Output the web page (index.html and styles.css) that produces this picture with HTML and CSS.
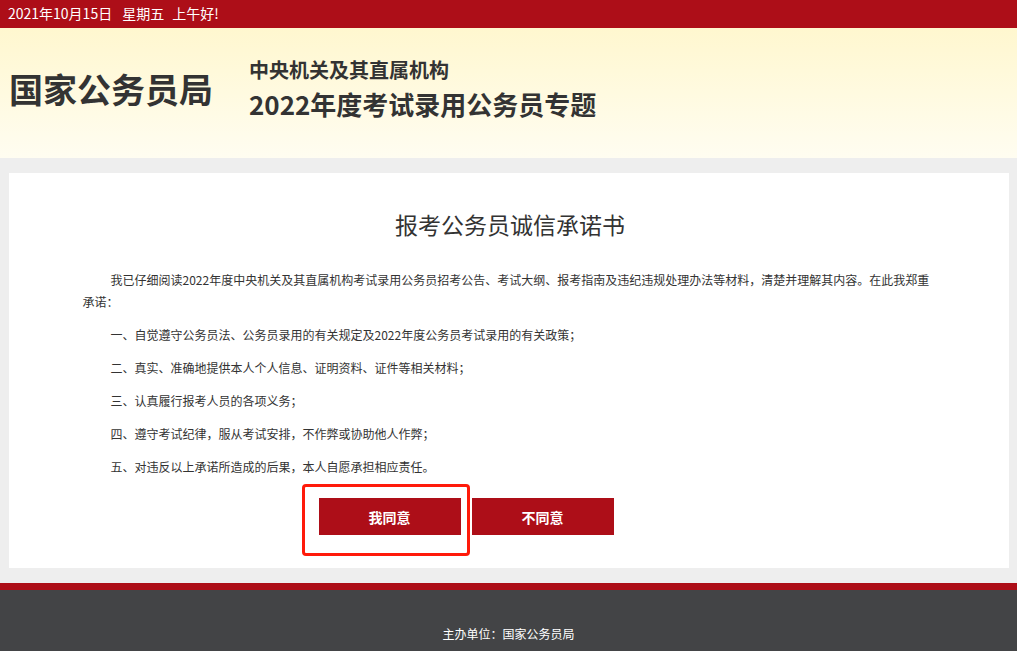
FILE: index.html
```html
<!DOCTYPE html>
<html>

<head>
    <meta charset="utf-8">
    <link rel="stylesheet" href="styles.css">
</head>

<body>

    <div class="topbar">
        <span>2021年10月15日</span><span class="gap">星期五</span><span class="gap-sm">上午好!</span>
    </div>

    <div class="header">
        <div class="logo">国家公务员局</div>
        <div class="header-title">
            <div class="sub">中央机关及其直属机构</div>
            <div class="main">2022年度考试录用公务员专题</div>
        </div>
    </div>

    <div class="page">
        <div class="container">
            <h2>报考公务员诚信承诺书</h2>

            <p class="indent">我已仔细阅读2022年度中央机关及其直属机构考试录用公务员招考公告、考试大纲、报考指南及违纪违规处理办法等材料，清楚并理解其内容。在此我郑重承诺：</p>
            <p class="indent">一、自觉遵守公务员法、公务员录用的有关规定及2022年度公务员考试录用的有关政策；</p>
            <p class="indent">二、真实、准确地提供本人个人信息、证明资料、证件等相关材料；</p>
            <p class="indent">三、认真履行报考人员的各项义务；</p>
            <p class="indent">四、遵守考试纪律，服从考试安排，不作弊或协助他人作弊；</p>
            <p class="indent">五、对违反以上承诺所造成的后果，本人自愿承担相应责任。</p>

            <div class="button-container">
                <button id="agreeButton" onclick="agree()">我同意</button>
                <button onclick="disagree()">不同意</button>
                <div class="highlight"></div>
            </div>
        </div>
    </div>

    <div class="footer">
        主办单位：国家公务员局
    </div>

    <script>
        function agree() {
            document.getElementById("agreeButton").innerHTML = "我同意";
        }

        function disagree() {
            // nothing to do here, stays on the page
        }
    </script>

</body>

</html>
```

FILE: styles.css
```css
body {
    margin: 0;
    font-family: "Noto Sans CJK SC", "Noto Sans", sans-serif;
    background-color: #eeeeee;
    color: #333;
}

.topbar {
    height: 28px;
    line-height: 27px;
    padding-left: 8px;
    background-color: #ad0e18;
    color: #fff;
    font-size: 14px;
}

.topbar .gap {
    margin-left: 10px;
}

.topbar .gap-sm {
    margin-left: 8px;
}

.header {
    height: 130px;
    display: flex;
    align-items: center;
    background: linear-gradient(#fff7cf, #fffdf1);
}

.logo {
    margin-left: 9px;
    margin-top: -9px;
    font-size: 34px;
    font-weight: bold;
    color: #333;
}

.header-title {
    margin-left: 36px;
    margin-top: -6px;
    font-weight: bold;
    color: #333;
}

.header-title .sub {
    font-size: 20px;
    line-height: 28px;
}

.header-title .main {
    font-size: 26px;
    line-height: 40px;
}

.page {
    padding: 15px 0;
}

.container {
    width: 1000px;
    margin: 0 auto;
    padding: 34px 71px 33px 74px;
    box-sizing: border-box;
    background-color: #fff;
}

h2 {
    margin: 0 0 28px;
    font-size: 23px;
    line-height: 34px;
    font-weight: normal;
    text-align: center;
    color: #333;
}

p {
    margin: 0 0 11px;
    font-size: 12px;
    line-height: 22px;
    color: #333;
}

.indent {
    text-indent: 28px;
}

.button-container {
    position: relative;
    display: flex;
    gap: 11px;
    margin-top: 20px;
    padding-left: 236px;
}

button {
    width: 142px;
    height: 37px;
    border: none;
    background-color: #ad0e18;
    color: #fff;
    font-family: "Noto Sans CJK SC", sans-serif;
    font-size: 14px;
    font-weight: bold;
    cursor: pointer;
}

.highlight {
    position: absolute;
    left: 219px;
    top: -14px;
    width: 162px;
    height: 66px;
    border: 3px solid #ff1a0a;
    border-radius: 4px;
    pointer-events: none;
}

.footer {
    height: 61px;
    padding-top: 35px;
    border-top: 7px solid #ad0e18;
    background-color: #434446;
    color: #fff;
    font-size: 12px;
    text-align: center;
}
```
